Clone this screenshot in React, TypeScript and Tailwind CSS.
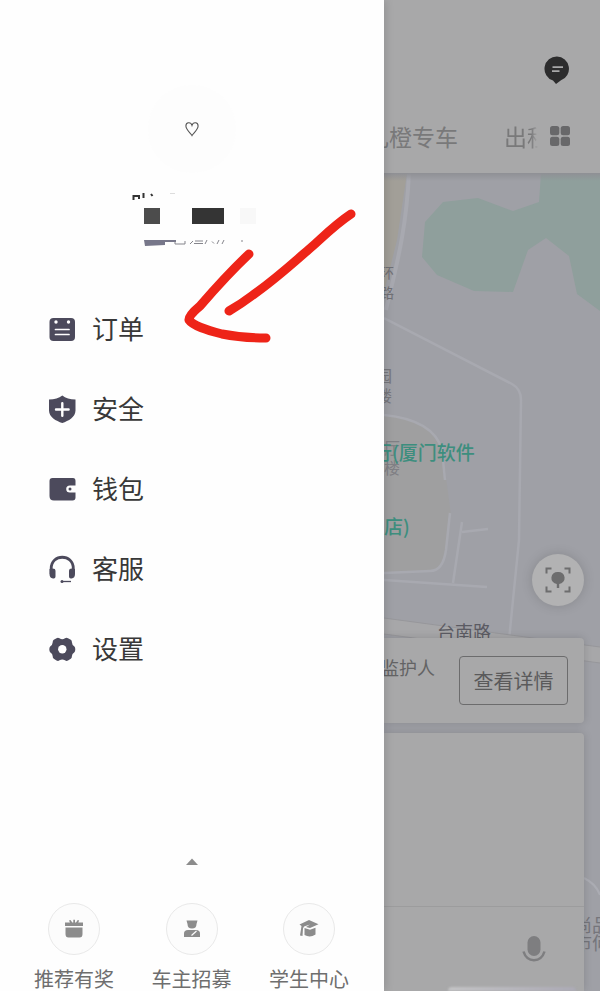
import React from "react";

interface MenuItemProps {
  label: string;
  children: React.ReactNode;
}

const MenuItem: React.FC<MenuItemProps> = ({ label, children }) => {
  return (
    <li>
      <a href="#" className="flex h-20 items-center gap-4 pl-12 text-[26px] text-[#383838]">
        <svg viewBox="0 0 28 28" className="h-7 w-7 shrink-0">
          {children}
        </svg>
        <span className="pb-1">{label}</span>
      </a>
    </li>
  );
};

const Shortcut: React.FC<MenuItemProps> = ({ label, children }) => {
  return (
    <li>
      <a href="#" className="flex flex-col items-center gap-3 text-xl leading-6 text-[#6e6e6e]">
        <span className="flex h-[52px] w-[52px] items-center justify-center rounded-full border border-[#e9e9e9] bg-[#fcfcfc]">
          <svg viewBox="0 0 20 20" className="h-5 w-5 text-[#8c8c8c]" fill="currentColor">
            {children}
          </svg>
        </span>
        <span className="whitespace-nowrap">{label}</span>
      </a>
    </li>
  );
};

const Profile: React.FC = () => {
  return (
    <div className="flex flex-col items-center pt-[85px]">
      <div className="flex h-[88px] w-[88px] items-center justify-center rounded-full bg-[#fdfdfd]">
        <svg viewBox="0 0 16 16" className="h-4 w-4" fill="none" stroke="#555555" strokeWidth="1.1">
          <path d="M8 14.5C6.8 12.2 1.9 8.8 1.9 5.1C1.9 0.9 6.9 0.7 8 4.3C9.1 0.7 14.1 0.9 14.1 5.1C14.1 8.8 9.2 12.2 8 14.5Z" />
        </svg>
      </div>
      {/* Nome e nível mascarados */}
      <svg viewBox="127 190 130 60" className="mt-[17px] h-[60px] w-[130px]">
        <path d="M133.5 200V196H139V199M143.5 193V198M151 194L152.5 196" fill="none" stroke="#333333" strokeWidth="2" />
        <path d="M170 193.5h5" stroke="#dddddd" />
        <rect x="144" y="208" width="16" height="16" fill="#4c4c4c" />
        <rect x="192" y="208" width="32" height="16" fill="#343434" />
        <rect x="240" y="208" width="16" height="16" fill="#f8f8f8" />
        <path d="M144 240H176V242H165V245L145 246Z" fill="#77778a" />
        <path d="M175 241.5V244H185V241M190 244L193 241M194 243.5H203M195 241H203M207 240L205 244M212 241.5L214 243.5M219 240L217 244M224 240L222 244M241 241h2" fill="none" stroke="#85858c" />
      </svg>
    </div>
  );
};

const Drawer: React.FC = () => {
  return (
    <aside className="relative z-10 flex w-[64%] shrink-0 flex-col bg-[#fefefe] shadow-[2px_0_8px_rgba(0,0,0,0.12)]">
      <Profile />
      <nav className="mt-[39px]">
        <ul>
          <MenuItem label="订单">
            <rect x="1.5" y="3" width="25.5" height="23" rx="4" fill="#4c4a5c" />
            <circle cx="8" cy="7" r="1.7" fill="#fff" />
            <circle cx="20.5" cy="7" r="1.7" fill="#fff" />
            <path d="M7.5 14.5h13.5M7.5 19.5h13.5" stroke="#fff" strokeWidth="1.7" strokeLinecap="round" />
          </MenuItem>
          <MenuItem label="安全">
            <path d="M14.3 0.5C17.5 3.2 22 4.3 27.5 4.5V15.5C27.5 22 20.5 26 14.3 28C8 26 1 22 1 15.5V4.5C6.5 4.3 11 3.2 14.3 0.5Z" fill="#4c4a5c" />
            <path d="M14.3 8.2V20.8M8 14.5H20.6" stroke="#fff" strokeWidth="2.4" strokeLinecap="round" />
          </MenuItem>
          <MenuItem label="钱包">
            <path d="M4.5 3H25Q27.5 3 27.5 6V10.5H22Q18.2 10.5 18.2 14T22 17.5H27.5V22.5Q27.5 25.5 24.5 25.5H6Q1.5 25.5 1.5 21V6Q1.5 3 4.5 3Z" fill="#4c4a5c" />
            <circle cx="22" cy="14" r="1.5" fill="#4c4a5c" />
          </MenuItem>
          <MenuItem label="客服">
            <path d="M3.2 19V13.5C3.2 -1.5 25.3 -1.5 25.3 13.5V19" fill="none" stroke="#4c4a5c" strokeWidth="2.8" />
            <path d="M1.5 14Q7.5 12.5 7.5 16V21.5Q7.5 24 5 23.5Q1.5 23 1.5 19Z" fill="#4c4a5c" />
            <path d="M27 14Q21 12.5 21 16V21.5Q21 24 23.5 23.5Q27 23 27 19Z" fill="#4c4a5c" />
            <path d="M14 26.5H23" stroke="#4c4a5c" strokeWidth="1.3" />
            <circle cx="14" cy="26.5" r="1.5" fill="#4c4a5c" />
          </MenuItem>
          <MenuItem label="设置">
            <path d="M8.5 3.2Q10 2.2 11.5 3.3Q14.3 5 17 3.3Q18.5 2.2 20 3.2L22.8 4.8Q24 5.6 23.9 7.3Q24 10 26.2 11.2Q27.3 12 27.3 14.3T26.2 17.4Q24 18.6 23.9 21.3Q24 23 22.8 23.8L20 25.4Q18.5 26.4 17 25.3Q14.3 23.6 11.5 25.3Q10 26.4 8.5 25.4L5.8 23.8Q4.6 23 4.7 21.3Q4.6 18.6 2.4 17.4Q1.3 16.6 1.3 14.3T2.4 11.2Q4.6 10 4.7 7.3Q4.6 5.6 5.8 4.8Z" fill="#4c4a5c" />
            <circle cx="14.3" cy="14.3" r="4.2" fill="#fff" />
          </MenuItem>
        </ul>
      </nav>
      <div className="mt-auto flex flex-col items-center">
        <button type="button" aria-label="展开" className="flex h-4 w-8 items-center justify-center">
          <svg viewBox="0 0 12 7" className="h-[7px] w-3">
            <path d="M0 7L6 0.5L12 7Z" fill="#8c8c8c" />
          </svg>
        </button>
        <ul className="mt-[34px] flex w-full justify-between pr-[35px] pl-[34px]">
          <Shortcut label="推荐有奖">
            <path d="M1 3.5H6L5 1.5L6.5 1L8.3 3.5H9.3V0.8H11V3.5H12L13.7 1L15.2 1.5L14.2 3.5H19V7H1Z" />
            <path d="M1.5 8.5H18.5V15Q18.5 18.5 15.5 18.5H4.5Q1.5 18.5 1.5 15Z" />
          </Shortcut>
          <Shortcut label="车主招募">
            <path d="M4.5 1.5H15.5L14.5 5Q14.5 9.5 10 9.5T5.5 5Z" />
            <path d="M2 18V14.5Q2 11 6 11H14Q18 11 18 14.5V18Z" />
            <path d="M9.5 16.5L14.5 12" stroke="#fcfcfc" strokeWidth="1.2" />
          </Shortcut>
          <Shortcut label="学生中心">
            <path d="M10 1L19.5 5.2L11 9L7 8L11 5.5L5 7.5L4 9.5L3.5 17L1 16.5L2.5 7L0.5 5.5Z" />
            <path d="M5.5 9L11 10.8L16.5 8.8V15.5Q11 19 5.5 16Z" />
          </Shortcut>
        </ul>
      </div>
    </aside>
  );
};

const MapCanvas: React.FC = () => {
  return (
    <div className="absolute inset-0 overflow-hidden bg-[#9fa0a6]">
      <svg viewBox="384 173 216 818" preserveAspectRatio="xMinYMin slice" className="h-full w-full">
        <path d="M384 173H407L397 240L384 292Z" fill="#a29f98" />
        <path d="M541 173L539 202L513 211L478 198L443 202L425 222L422 257L437 275L474 291L513 292L528 250L546 238L569 256L577 294L600 311V173Z" fill="#8f9f9c" />
        <path d="M384 415Q434 420 443 455L451 515L444 558Q441 571 430 571L384 573Z" fill="#9f9fa0" />
        <g fill="none" stroke="#a8a9b0" strokeWidth="2.5">
          <path d="M409 173C406 235 395 270 386 310" strokeWidth="4" />
          <path d="M384 318L512 384Q521 389 521 400L519 540L509 640" />
          <path d="M384 415Q434 420 442 450L445 480M450 513L446 550Q443 571 430 571L384 573" />
          <path d="M384 580L487 587M462 522L453 583M462 532L488 529" />
        </g>
        <path d="M384 618L600 647V663L384 634Z" fill="#a7a7a9" />
        <path d="M384 618L600 647M384 634L600 663" stroke="#97979b" strokeWidth="1" />
        <path d="M584 878Q596 884 600 895" fill="none" stroke="#abacb3" strokeWidth="2" />
      </svg>
      <div className="absolute inset-x-0 top-0 h-2 bg-linear-to-b from-[#8f9095] to-transparent" />
      <p className="absolute top-[89px] -left-1 w-4 text-sm leading-5 text-[#707075]">环路</p>
      <p className="absolute top-[192px] -left-2 w-4 text-base leading-5 text-[#77777c]">园楼</p>
      <p className="absolute top-[264px] left-0 w-4 text-base leading-5 text-[#808085]">厅楼</p>
      <p className="absolute top-[267px] -left-[11px] text-[19px] leading-6 font-medium whitespace-nowrap text-[#3d8e7e]">行(厦门软件</p>
      <p className="absolute top-[341px] left-0 text-[19px] leading-6 font-medium whitespace-nowrap text-[#3d8e7e]">店)</p>
      <p className="absolute top-[446px] left-[53px] text-lg leading-6 whitespace-nowrap text-[#5b5b63]">台南路</p>
      <p className="absolute top-[742px] left-[190px] w-10 text-lg leading-[18px] text-[#75757b]">尚品市何</p>
    </div>
  );
};

const HomePage: React.FC = () => {
  return (
    <main className="flex min-w-0 flex-1 flex-col overflow-hidden bg-[#a8a8a9]">
      <header className="flex h-[173px] shrink-0 flex-col pt-14">
        <button type="button" aria-label="消息" className="mr-[30px] self-end">
          <svg viewBox="0 0 26 28" className="h-7 w-[26px]">
            <path d="M13 0.5A12.3 12.3 0 0 0 9 24.5L12 28L17 24.3A12.3 12.3 0 0 0 13 0.5Z" fill="#2c2c2d" />
            <path d="M8.5 11.2H19M8 15.2H15.5" stroke="#a8a8a9" strokeWidth="1.7" />
          </svg>
        </button>
        <nav className="mt-9 flex items-center justify-between pr-[30px] text-[23px] leading-8 text-[#79797a]">
          <a href="#" className="flex w-[74px] justify-end overflow-hidden whitespace-nowrap">礼橙专车</a>
          <div className="flex items-center gap-3">
            <a href="#" className="w-[34px] overflow-hidden mask-r-from-80% whitespace-nowrap">出租车</a>
            <button type="button" aria-label="全部服务">
              <svg viewBox="0 0 20 20" className="h-5 w-5" fill="#68686a">
                <rect x="0" y="0" width="9.3" height="9.3" rx="2.5" />
                <rect x="10.7" y="0" width="9.3" height="9.3" rx="2.5" />
                <rect x="0" y="10.7" width="9.3" height="9.3" rx="2.5" />
                <rect x="10.7" y="10.7" width="9.3" height="9.3" rx="2.5" />
              </svg>
            </button>
          </div>
        </nav>
      </header>

      <section className="relative flex flex-1 flex-col">
        <MapCanvas />
        <div className="relative mt-auto mr-4 flex flex-col">
          <button type="button" aria-label="定位" className="mb-8 flex h-[52px] w-[52px] items-center justify-center self-end rounded-full bg-[#b2b2b3] shadow-[0_0_12px_rgba(0,0,0,0.15)]">
            <svg viewBox="0 0 26 26" className="h-[26px] w-[26px]">
              <path d="M1.5 6.5V1.5H6.5M19.5 1.5H24.5V6.5M24.5 19.5V24.5H19.5M6.5 24.5H1.5V19.5" fill="none" stroke="#6d6d6e" strokeWidth="2" />
              <path d="M13 5A6 6 0 0 0 11.8 17V21H14.2V17A6 6 0 0 0 13 5Z" fill="#6d6d6e" />
            </svg>
          </button>
          <div className="flex h-[85px] items-center justify-between rounded-tr-sm rounded-br-sm bg-[#a8a8a9] pr-4 shadow-[0_0_8px_rgba(0,0,0,0.15)]">
            <p className="mb-7 flex w-[51px] justify-end overflow-hidden text-lg whitespace-nowrap text-[#636364]">监护人</p>
            <button type="button" className="h-[49px] w-[109px] rounded-sm border border-[#6c6c6d] text-xl whitespace-nowrap text-[#5a5a5b]">查看详情</button>
          </div>
          <div className="mt-[10px] flex flex-col rounded-tr-sm bg-[#a8a8a9] shadow-[0_0_8px_rgba(0,0,0,0.15)]">
            <div className="h-[174px] border-b border-[#9c9c9d]" />
            <div className="flex h-20 items-center justify-end pt-1 pr-[38px]">
              <button type="button" aria-label="语音输入">
                <svg viewBox="0 0 24 26" className="h-[26px] w-6">
                  <rect x="5.5" y="0" width="13" height="20" rx="6.5" fill="#7e7e80" />
                  <path d="M1.5 15.5C5 27 19 27 22.5 15.5" fill="none" stroke="#7e7e80" strokeWidth="2.5" />
                </svg>
              </button>
            </div>
            <div className="mr-2 ml-16 h-1 rounded-t-full bg-linear-to-r from-[#c4c4c6] to-[#acaab6] blur-[1px]" />
          </div>
        </div>
      </section>
    </main>
  );
};

const Arrow: React.FC = () => {
  return (
    <svg
      viewBox="170 200 200 150"
      className="pointer-events-none absolute top-[200px] left-[170px] z-20 h-[150px] w-[200px]"
      fill="none"
      stroke="#ee2418"
      strokeWidth="9"
      strokeLinecap="round"
      strokeLinejoin="round"
    >
      <path d="M351 214C336 224 326 234 315 244C292 264 276 279 253 295Q241 304 229 311" />
      <path d="M249 254C232 270 213 291 200 306Q188 316 189 320C193 326 207 330 222 334Q242 338 266 338" />
    </svg>
  );
};

const App: React.FC = () => {
  return (
    <div className="relative flex min-h-screen overflow-hidden font-['Noto_Sans_CJK_SC',sans-serif]">
      <Drawer />
      <HomePage />
      <Arrow />
    </div>
  );
};

export default App;
